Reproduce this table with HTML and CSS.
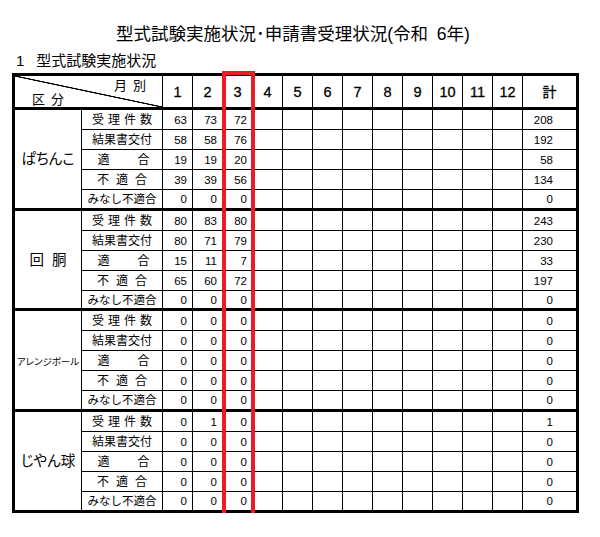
FILE: index.html
```html
<!DOCTYPE html>
<html lang="ja">
<head>
<meta charset="utf-8">
<title>型式試験実施状況・申請書受理状況</title>
<link rel="stylesheet" href="styles.css">
</head>
<body>
<div class="page">
  <h1 class="title">型式試験実施状況･申請書受理状況(令和&ensp;6年)</h1>
  <p class="subtitle"><span class="num">1</span>型式試験実施状況</p>
  <div class="tablewrap">
    <table class="stats">
      <colgroup>
        <col class="c-cat"><col class="c-lab">
        <col class="c-m"><col class="c-m"><col class="c-m"><col class="c-m"><col class="c-m"><col class="c-m">
        <col class="c-m"><col class="c-m"><col class="c-m"><col class="c-m"><col class="c-m"><col class="c-m">
        <col class="c-tot">
      </colgroup>
      <thead>
        <tr class="hrow">
          <th class="corner" colspan="2">
            <div class="corner-in">
              <span class="month">月別</span>
              <span class="kubun">区分</span>
            </div>
          </th>
          <th>1</th><th>2</th><th>3</th><th>4</th><th>5</th><th>6</th>
          <th>7</th><th>8</th><th>9</th><th>10</th><th>11</th><th>12</th>
          <th class="tot kei">計</th>
        </tr>
      </thead>
      <tbody>
        <!-- ぱちんこ -->
        <tr>
          <td class="cat" rowspan="5"><span class="catname">ぱちんこ</span></td>
          <td class="lab"><span class="j w60">受 理 件 数</span></td>
          <td class="n">63</td><td class="n">73</td><td class="n">72</td>
          <td></td><td></td><td></td><td></td><td></td><td></td><td></td><td></td><td></td>
          <td class="n tot">208</td>
        </tr>
        <tr>
          <td class="lab">結果書交付</td>
          <td class="n">58</td><td class="n">58</td><td class="n">76</td>
          <td></td><td></td><td></td><td></td><td></td><td></td><td></td><td></td><td></td>
          <td class="n tot">192</td>
        </tr>
        <tr>
          <td class="lab"><span class="j w52 shift">適 合</span></td>
          <td class="n">19</td><td class="n">19</td><td class="n">20</td>
          <td></td><td></td><td></td><td></td><td></td><td></td><td></td><td></td><td></td>
          <td class="n tot">58</td>
        </tr>
        <tr>
          <td class="lab"><span class="j w50">不 適 合</span></td>
          <td class="n">39</td><td class="n">39</td><td class="n">56</td>
          <td></td><td></td><td></td><td></td><td></td><td></td><td></td><td></td><td></td>
          <td class="n tot">134</td>
        </tr>
        <tr class="ge tall">
          <td class="lab small">みなし不適合</td>
          <td class="n">0</td><td class="n">0</td><td class="n">0</td>
          <td></td><td></td><td></td><td></td><td></td><td></td><td></td><td></td><td></td>
          <td class="n tot">0</td>
        </tr>
        <!-- 回胴 -->
        <tr>
          <td class="cat" rowspan="5"><span class="j w37 catname">回 胴</span></td>
          <td class="lab"><span class="j w60">受 理 件 数</span></td>
          <td class="n">80</td><td class="n">83</td><td class="n">80</td>
          <td></td><td></td><td></td><td></td><td></td><td></td><td></td><td></td><td></td>
          <td class="n tot">243</td>
        </tr>
        <tr>
          <td class="lab">結果書交付</td>
          <td class="n">80</td><td class="n">71</td><td class="n">79</td>
          <td></td><td></td><td></td><td></td><td></td><td></td><td></td><td></td><td></td>
          <td class="n tot">230</td>
        </tr>
        <tr>
          <td class="lab"><span class="j w52 shift">適 合</span></td>
          <td class="n">15</td><td class="n">11</td><td class="n">7</td>
          <td></td><td></td><td></td><td></td><td></td><td></td><td></td><td></td><td></td>
          <td class="n tot">33</td>
        </tr>
        <tr>
          <td class="lab"><span class="j w50">不 適 合</span></td>
          <td class="n">65</td><td class="n">60</td><td class="n">72</td>
          <td></td><td></td><td></td><td></td><td></td><td></td><td></td><td></td><td></td>
          <td class="n tot">197</td>
        </tr>
        <tr class="ge">
          <td class="lab small">みなし不適合</td>
          <td class="n">0</td><td class="n">0</td><td class="n">0</td>
          <td></td><td></td><td></td><td></td><td></td><td></td><td></td><td></td><td></td>
          <td class="n tot">0</td>
        </tr>
        <!-- アレンジボール -->
        <tr>
          <td class="cat" rowspan="5"><span class="catname cat-sm">アレンジボール</span></td>
          <td class="lab"><span class="j w60">受 理 件 数</span></td>
          <td class="n">0</td><td class="n">0</td><td class="n">0</td>
          <td></td><td></td><td></td><td></td><td></td><td></td><td></td><td></td><td></td>
          <td class="n tot">0</td>
        </tr>
        <tr>
          <td class="lab">結果書交付</td>
          <td class="n">0</td><td class="n">0</td><td class="n">0</td>
          <td></td><td></td><td></td><td></td><td></td><td></td><td></td><td></td><td></td>
          <td class="n tot">0</td>
        </tr>
        <tr>
          <td class="lab"><span class="j w52 shift">適 合</span></td>
          <td class="n">0</td><td class="n">0</td><td class="n">0</td>
          <td></td><td></td><td></td><td></td><td></td><td></td><td></td><td></td><td></td>
          <td class="n tot">0</td>
        </tr>
        <tr>
          <td class="lab"><span class="j w50">不 適 合</span></td>
          <td class="n">0</td><td class="n">0</td><td class="n">0</td>
          <td></td><td></td><td></td><td></td><td></td><td></td><td></td><td></td><td></td>
          <td class="n tot">0</td>
        </tr>
        <tr class="ge tall">
          <td class="lab small">みなし不適合</td>
          <td class="n">0</td><td class="n">0</td><td class="n">0</td>
          <td></td><td></td><td></td><td></td><td></td><td></td><td></td><td></td><td></td>
          <td class="n tot">0</td>
        </tr>
        <!-- じやん球 -->
        <tr>
          <td class="cat" rowspan="5"><span class="catname">じやん球</span></td>
          <td class="lab"><span class="j w60">受 理 件 数</span></td>
          <td class="n">0</td><td class="n">1</td><td class="n">0</td>
          <td></td><td></td><td></td><td></td><td></td><td></td><td></td><td></td><td></td>
          <td class="n tot">1</td>
        </tr>
        <tr>
          <td class="lab">結果書交付</td>
          <td class="n">0</td><td class="n">0</td><td class="n">0</td>
          <td></td><td></td><td></td><td></td><td></td><td></td><td></td><td></td><td></td>
          <td class="n tot">0</td>
        </tr>
        <tr>
          <td class="lab"><span class="j w52 shift">適 合</span></td>
          <td class="n">0</td><td class="n">0</td><td class="n">0</td>
          <td></td><td></td><td></td><td></td><td></td><td></td><td></td><td></td><td></td>
          <td class="n tot">0</td>
        </tr>
        <tr>
          <td class="lab"><span class="j w50">不 適 合</span></td>
          <td class="n">0</td><td class="n">0</td><td class="n">0</td>
          <td></td><td></td><td></td><td></td><td></td><td></td><td></td><td></td><td></td>
          <td class="n tot">0</td>
        </tr>
        <tr class="ge tall">
          <td class="lab small">みなし不適合</td>
          <td class="n">0</td><td class="n">0</td><td class="n">0</td>
          <td></td><td></td><td></td><td></td><td></td><td></td><td></td><td></td><td></td>
          <td class="n tot">0</td>
        </tr>
      </tbody>
    </table>
    <div class="mark"></div>
  </div>
</div>
</body>
</html>
```

FILE: styles.css
```css
* {
  box-sizing: border-box;
}

body {
  margin: 0;
  background: #fff;
  color: #000;
  font-family: "Liberation Sans", "Noto Sans CJK JP", sans-serif;
}

.page {
  padding-left: 12px;
  width: 579px;
}

.title {
  margin: 0;
  padding: 24px 5px 0 0;
  font-size: 17.5px;
  line-height: 20px;
  font-weight: normal;
  text-align: center;
}

.subtitle {
  margin: 8px 0 0;
  padding-left: 4px;
  font-size: 15px;
  line-height: 18px;
}

.subtitle .num {
  margin-right: 12px;
}

.tablewrap {
  position: relative;
  margin-top: 3px;
  width: 567px;
}

.stats {
  border-collapse: separate;
  border-spacing: 0;
  table-layout: fixed;
  width: 567px;
  border-left: 3px solid #000;
  border-top: 3px solid #000;
}

.c-cat { width: 67px; }
.c-lab { width: 81px; }
.c-m { width: 30px; }
.c-tot { width: 56px; }

.stats th,
.stats td {
  padding: 0;
  border-right: 1px solid #000;
  border-bottom: 1px solid #000;
  vertical-align: middle;
  line-height: 14px;
}

.stats tr {
  height: 20px;
}

.stats tr.hrow {
  height: 34px;
}

.stats tr.tall {
  height: 21px;
}

.stats th {
  border-bottom: 3px solid #000;
  font-size: 14.5px;
  font-weight: normal;
  text-align: center;
  -webkit-text-stroke: 0.3px #000;
}

.stats th.kei {
  font-size: 14px;
}

.stats .tot {
  border-right: 3px solid #000;
}

.stats tr.ge td,
.stats td.cat {
  border-bottom: 3px solid #000;
}

.stats th.corner {
  -webkit-text-stroke: 0;
  background: linear-gradient(to top right,
    transparent calc(50% - 0.9px),
    #000 calc(50% - 0.4px),
    #000 calc(50% + 0.4px),
    transparent calc(50% + 0.9px));
}

.corner-in {
  display: flex;
  flex-direction: column;
  padding-top: 2px;
  font-size: 13px;
  line-height: 14px;
}

.corner-in .month {
  align-self: flex-end;
  letter-spacing: 6px;
  margin-right: 10px;
}

.corner-in .kubun {
  align-self: flex-start;
  letter-spacing: 6px;
  margin-left: 17px;
}

.j {
  display: inline-block;
  text-align: justify;
  text-align-last: justify;
}

.w37 { width: 37px; }
.w50 { width: 50px; }
.w52 { width: 52px; }
.w60 { width: 60px; }

.shift {
  margin-left: 3px;
}

.cat {
  text-align: center;
}

.catname {
  font-size: 14.5px;
  line-height: 18px;
  font-feature-settings: "palt";
}

.catname.cat-sm {
  font-size: 9.5px;
  line-height: 12px;
}

.lab {
  text-align: center;
  font-size: 12px;
}

.lab.small {
  font-size: 11.5px;
}

.n {
  text-align: right;
  padding-right: 5px !important;
  font-size: 11.5px;
}

.n.tot {
  padding-right: 23px !important;
}

.mark {
  position: absolute;
  left: 210px;
  top: -2px;
  width: 33px;
  height: 446px;
  border: 4px solid #ec1c24;
  pointer-events: none;
}
```
